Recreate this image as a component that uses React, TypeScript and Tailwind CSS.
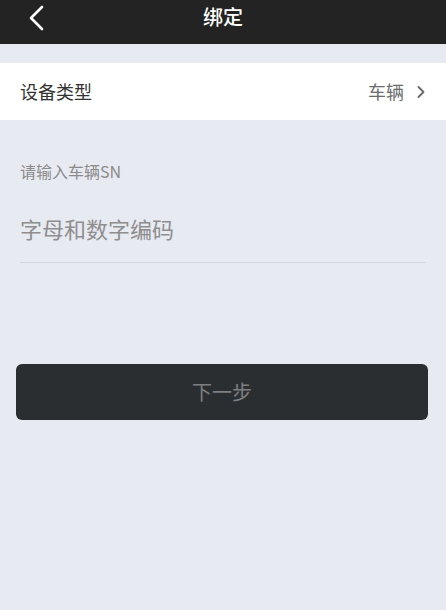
import React from 'react';

const App: React.FC = () => {
  return (
    <div
      className="w-[446px] h-[610px] bg-[#e8eaf2] flex flex-col overflow-hidden"
      style={{ fontFamily: '"Noto Sans CJK SC", "Noto Sans", sans-serif' }}
    >
      <header className="h-[44px] bg-[#232323] relative flex items-start justify-center">
        <button className="absolute left-[24px] top-[4px] w-[24px] h-[28px] flex items-center justify-center">
          <svg width="18" height="26" viewBox="0 0 18 26" fill="none">
            <path d="M15 2 L4 13 L15 24" stroke="#ffffff" strokeWidth="2.6" strokeLinecap="round" strokeLinejoin="round" />
          </svg>
        </button>
        <h1 className="text-[20px] leading-[34px] text-white font-medium">绑定</h1>
      </header>

      <div className="mt-[19px] h-[57px] bg-white flex items-center justify-between pl-[20px] pr-[20px]">
        <span className="text-[18px] text-[#333333]">设备类型</span>
        <div className="flex items-center gap-[12px]">
          <span className="text-[18px] text-[#6b6b6b]">车辆</span>
          <svg width="10" height="14" viewBox="0 0 10 14" fill="none">
            <path d="M2.5 2 L7.5 7 L2.5 12" stroke="#666666" strokeWidth="1.8" strokeLinecap="round" strokeLinejoin="round" />
          </svg>
        </div>
      </div>

      <div className="px-[20px] pt-[40px]">
        <p className="text-[16px] leading-[22px] text-[#8a8a8a]">请输入车辆SN</p>
        <div className="mt-[31px] h-[50px] border-b border-[#d6d7de] flex items-start">
          <span className="text-[22px] leading-[30px] text-[#8e8e8e]">字母和数字编码</span>
        </div>
      </div>

      <div className="px-[16px] mt-[101px]">
        <button className="w-[412px] h-[56px] rounded-[6px] bg-[#2b2e31] flex items-center justify-center">
          <span className="text-[20px] text-[#7d7f80]">下一步</span>
        </button>
      </div>
    </div>
  );
};

export default App;
